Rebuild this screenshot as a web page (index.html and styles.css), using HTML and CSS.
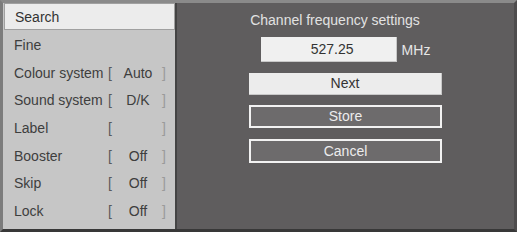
FILE: index.html
```html
<!DOCTYPE html>
<html>
<head>
<meta charset="utf-8">
<link rel="stylesheet" href="styles.css">
</head>
<body>
<div class="screen">
  <div class="menu">
    <div class="row active"><span class="lbl">Search</span></div>
    <div class="row"><span class="lbl">Fine</span></div>
    <div class="row"><span class="lbl">Colour system</span><span class="ob">[</span><span class="val">Auto</span><span class="cb">]</span></div>
    <div class="row"><span class="lbl">Sound system</span><span class="ob">[</span><span class="val">D/K</span><span class="cb">]</span></div>
    <div class="row"><span class="lbl">Label</span><span class="ob">[</span><span class="val"></span><span class="cb">]</span></div>
    <div class="row"><span class="lbl">Booster</span><span class="ob">[</span><span class="val">Off</span><span class="cb">]</span></div>
    <div class="row"><span class="lbl">Skip</span><span class="ob">[</span><span class="val">Off</span><span class="cb">]</span></div>
    <div class="row"><span class="lbl">Lock</span><span class="ob">[</span><span class="val">Off</span><span class="cb">]</span></div>
  </div>
  <div class="panel">
    <div class="title">Channel frequency settings</div>
    <div class="freq">
      <div class="input">527.25</div>
      <span class="unit">MHz</span>
    </div>
    <div class="btn light">Next</div>
    <div class="btn dark store">Store</div>
    <div class="btn dark cancel">Cancel</div>
  </div>
</div>
</body>
</html>
```

FILE: styles.css
```css
html, body {
  margin: 0;
  padding: 0;
  background: #5d5b5c;
}
.screen {
  width: 517px;
  height: 232px;
  box-sizing: border-box;
  display: flex;
  background: #5f5d5e;
  border-top: 3px solid #8a8a8a;
  border-left: 3px solid #7c7c7c;
  border-bottom: 3px solid #383838;
  border-right: 3px solid #4e4c4d;
  font-family: "Liberation Sans", Arial, sans-serif;
  font-size: 14px;
}
.menu {
  width: 172px;
  background: #c6c6c6;
  border-right: 2px solid #444;
  display: flex;
  flex-direction: column;
}
.row {
  height: 27.7px;
  display: grid;
  grid-template-columns: 94px 11px 38px 14px;
  align-items: center;
  color: #3e3e3e;
  padding-left: 11px;
  box-sizing: border-box;
}
.row.active {
  background: #ececec;
  border: 1px solid #a0a0a0;
  margin: 0 0 1px 1px;
  height: 27px;
  padding-left: 10px;
  color: #333;
}
.ob { color: #5a5a5a; }
.val { text-align: center; }
.cb { color: #9a9a9a; padding-left: 5px; }
.panel {
  flex: 1;
  display: flex;
  flex-direction: column;
  align-items: center;
  padding-top: 9px;
  color: #e6e6e6;
}
.title {
  height: 16px;
  line-height: 16px;
  margin-right: 21px;
  color: #e2e2e2;
}
.freq {
  display: flex;
  align-items: center;
  margin-top: 9px;
}
.input {
  width: 136px;
  height: 25px;
  line-height: 25px;
  background: #f0f0f0;
  color: #333;
  text-align: center;
  box-sizing: border-box;
  border-right: 1px solid #c8c8c8;
  border-bottom: 1px solid #c8c8c8;
  padding-left: 8px;
}
.unit {
  margin-left: 5px;
  color: #e6e6e6;
}
.btn {
  width: 193px;
  box-sizing: border-box;
  text-align: center;
}
.btn.light {
  margin-top: 11px;
  height: 22px;
  line-height: 21px;
  background: #ececec;
  color: #333;
  border-right: 1px solid #c8c8c8;
  border-bottom: 1px solid #c8c8c8;
}
.btn.dark {
  height: 23px;
  line-height: 19px;
  background: #6d6b6c;
  border: 2px solid #f2f2f2;
  color: #ececec;
}
.btn.store { margin-top: 10px; }
.btn.cancel { margin-top: 11px; height: 24px; line-height: 20px; }
```
